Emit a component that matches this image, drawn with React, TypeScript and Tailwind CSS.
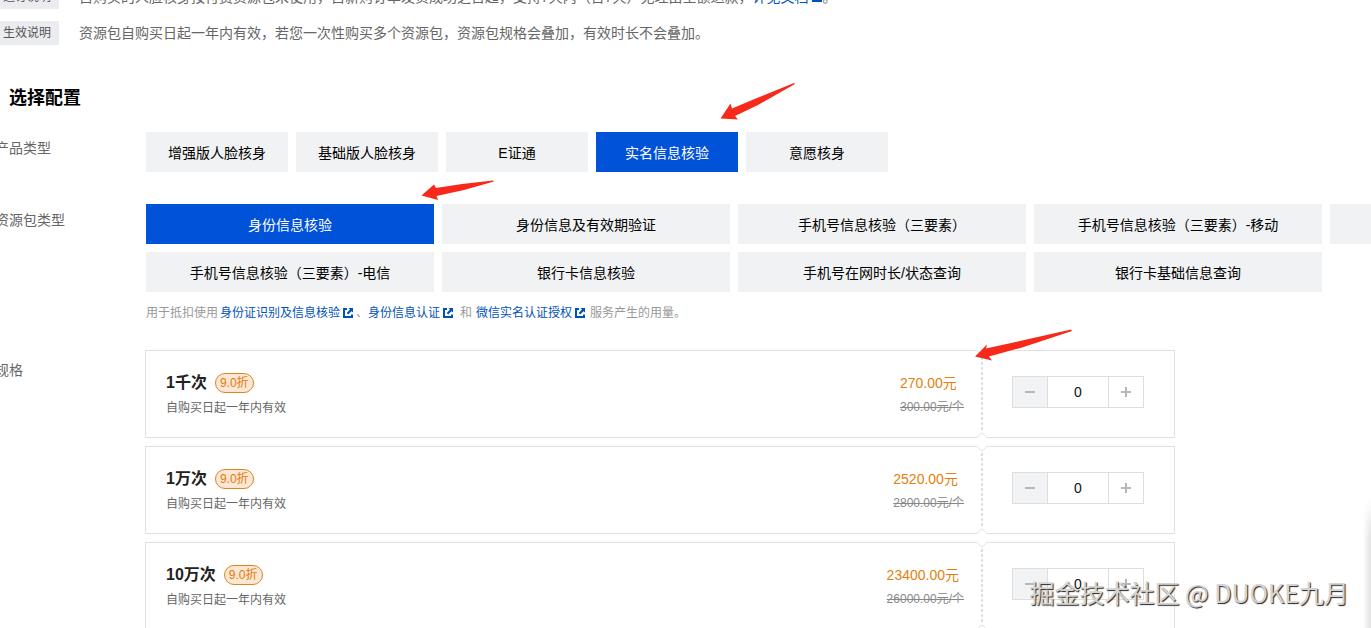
import { useState } from 'react';

const productTypes = ['增强版人脸核身', '基础版人脸核身', 'E证通', '实名信息核验', '意愿核身'];

const packTypes = [
  '身份信息核验',
  '身份信息及有效期验证',
  '手机号信息核验（三要素）',
  '手机号信息核验（三要素）-移动',
  '手机号信息核验（三要素）-联通',
  '手机号信息核验（三要素）-电信',
  '银行卡信息核验',
  '手机号在网时长/状态查询',
  '银行卡基础信息查询',
];

const specs = [
  { name: '1千次', price: '270.00元', original: '300.00元/个' },
  { name: '1万次', price: '2520.00元', original: '2800.00元/个' },
  { name: '10万次', price: '23400.00元', original: '26000.00元/个' },
];

function ExternalIcon() {
  return (
    <svg className="size-3 shrink-0" viewBox="0 0 12 12" fill="none" aria-hidden="true">
      <path d="M5 2H2V10H10V7.500" stroke="currentColor" strokeWidth="2" />
      <path d="M6.500 1H11V5.500L9.500 4.200L6.200 7.500L4.700 6L8 2.600Z" fill="currentColor" />
    </svg>
  );
}

function DocLink({ children }: { children: string }) {
  return (
    <a href="#doc" className="flex items-center gap-0.5 text-[#0052b8]">
      {children}
      <ExternalIcon />
    </a>
  );
}

function Options({ items, initial, label }: { items: string[]; initial: number; label: string }) {
  const [selected, setSelected] = useState(initial);
  return (
    <>
      {items.map((item, i) => (
        <button
          key={item}
          type="button"
          aria-label={`${label} ${item}`}
          aria-pressed={i === selected}
          onClick={() => setSelected(i)}
          className={`h-10 pt-0.5 whitespace-nowrap text-center ${
            i === selected ? 'bg-[#0052d9] text-white' : 'bg-[#f1f2f3] text-black'
          }`}
        >
          {item}
        </button>
      ))}
    </>
  );
}

function Stepper({ label }: { label: string }) {
  const [count, setCount] = useState(0);
  return (
    <div className="flex h-8 w-[132px] border border-[#dcdfe2]">
      <button
        type="button"
        aria-label={`减少 ${label}`}
        disabled={count === 0}
        onClick={() => setCount(count - 1)}
        className="flex w-[35px] items-center justify-center border-r border-[#dcdfe2] bg-[#f1f3f4] text-[#b5b7b9]"
      >
        <svg className="size-3" viewBox="0 0 12 12" aria-hidden="true">
          <path d="M1 6H11" stroke="currentColor" strokeWidth="2" />
        </svg>
      </button>
      <input
        aria-label={`数量 ${label}`}
        value={count}
        onChange={(e) => setCount(Number(e.target.value) || 0)}
        className="w-0 min-w-0 flex-1 bg-transparent text-center text-[#111] outline-none"
      />
      <button
        type="button"
        aria-label={`增加 ${label}`}
        onClick={() => setCount(count + 1)}
        className="flex w-[35px] items-center justify-center border-l border-[#dcdfe2] text-[#b5b7b9]"
      >
        <svg className="size-3" viewBox="0 0 12 12" aria-hidden="true">
          <path d="M1 6H11M6 1V11" stroke="currentColor" strokeWidth="2" />
        </svg>
      </button>
    </div>
  );
}

function Notch({ flip }: { flip?: boolean }) {
  return (
    <svg
      className={`absolute -left-[6px] h-[6px] w-[12px] ${flip ? '-bottom-px' : '-top-px rotate-180'}`}
      viewBox="0 0 12 6"
      aria-hidden="true"
    >
      <path d="M0 6L6 0.8L12 6Z" fill="white" />
      <path d="M0 5.5L1 5.5L6 0.8L11 5.5L12 5.5" fill="none" stroke="#dcdfe2" />
    </svg>
  );
}

function SpecCard({ name, price, original }: { name: string; price: string; original: string }) {
  return (
    <article className="flex h-[88px] border border-[#dfe1e3]">
      <div className="flex flex-1 items-start justify-between py-5 pr-[18px] pl-5">
        <div>
          <div className="flex h-6 items-center gap-2">
            <h3 className="text-base font-bold text-[#222]">{name}</h3>
            <span className="flex h-5 items-center rounded-full border border-[#dd8524] bg-[#fde6d2] px-1 text-xs text-[#e07b10]">
              9.0折
            </span>
          </div>
          <p className="h-[26px] text-xs leading-[26px] text-[#666]">自购买日起一年内有效</p>
        </div>
        <div>
          <p className="h-6 leading-6 text-[#e37f0c]">{price}</p>
          <p className="h-6 text-xs leading-6 text-[#888] line-through">{original}</p>
        </div>
      </div>
      <div className="relative flex w-[192px] items-center pb-1 pl-[30px]">
        <div className="absolute inset-y-[6px] -left-px w-[2px] bg-[repeating-linear-gradient(to_bottom,#dcdee0_0px,#dcdee0_3px,transparent_3px,transparent_5px)]" />
        <Notch />
        <Notch flip />
        <Stepper label={name} />
      </div>
    </article>
  );
}

export default function App() {
  return (
    <div className="relative h-screen overflow-hidden bg-white font-['Liberation_Sans','Noto_Sans_CJK_SC',sans-serif] text-sm">
      <main className="-mt-[15px] -ml-[5px]">
        <dl className="grid grid-cols-[64px_1fr] gap-x-5 gap-y-3 leading-6 text-[#666]">
          <dt className="h-6 bg-[#ebecef] text-center text-xs leading-6 text-[#555]">退订说明</dt>
          <dd className="flex h-6 whitespace-nowrap">
            自购买的人脸核身按付费资源包未使用，自新购订单发货成功之日起，支持7天内（含7天）无理由全额退款，
            <DocLink>详见文档</DocLink>。
          </dd>
          <dt className="h-6 bg-[#ebecef] text-center text-xs leading-6 text-[#555]">生效说明</dt>
          <dd className="h-6 whitespace-nowrap">
            资源包自购买日起一年内有效，若您一次性购买多个资源包，资源包规格会叠加，有效时长不会叠加。
          </dd>
        </dl>

        <h2 className="mt-[41px] pl-3.5 text-lg leading-6 font-bold text-black">选择配置</h2>

        <section className="mt-[22px] grid grid-cols-[151px_1fr]">
          <h3 className="leading-8 text-[#666]">产品类型</h3>
          <div className="grid grid-cols-[repeat(5,142px)] gap-2">
            <Options items={productTypes} initial={3} label="产品类型" />
          </div>
        </section>

        <section className="mt-8 grid grid-cols-[151px_1fr]">
          <h3 className="leading-8 text-[#666]">资源包类型</h3>
          <div>
            <div className="grid grid-cols-[repeat(5,288px)] gap-2">
              <Options items={packTypes} initial={0} label="资源包类型" />
            </div>
            <p className="mt-[9px] flex h-6 items-center text-xs text-[#999]">
              <span className="mr-0.5">用于抵扣使用</span>
              <DocLink>身份证识别及信息核验</DocLink>
              <span className="ml-0.5">、</span>
              <DocLink>身份信息认证</DocLink>
              <span className="mr-1 ml-1.5">和</span>
              <DocLink>微信实名认证授权</DocLink>
              <span className="ml-1">服务产生的用量。</span>
            </p>
          </div>
        </section>

        <section className="mt-[25px] grid grid-cols-[150px_1030px]">
          <h3 className="leading-10 text-[#666]">规格</h3>
          <div className="flex flex-col gap-2">
            {specs.map((s) => (
              <SpecCard key={s.name} {...s} />
            ))}
          </div>
        </section>
      </main>

      <svg className="pointer-events-none absolute top-[82px] left-[720px] h-[40px] w-[76px]" viewBox="720 82 76 40" aria-hidden="true">
        <path d="M794 83L757 98L732 108.500L730.500 103.500L720.500 118.500L738 119.500L735 116L758 105L795 84Z" fill="#f7291a" />
      </svg>
      <svg className="pointer-events-none absolute top-[178px] left-[420px] h-[24px] w-[76px]" viewBox="420 178 76 24" aria-hidden="true">
        <path d="M493 180.500L462 184L436 188L434 184.500L421.500 195.500L438 200L436.500 196L464 190L494 181.500Z" fill="#f7291a" />
      </svg>
      <svg className="pointer-events-none absolute top-[328px] left-[973px] h-[34px] w-[100px]" viewBox="973 328 100 34" aria-hidden="true">
        <path d="M1071 329.500L1020 341L986 348.500L987 344.500L975 356.500L992 360.500L989 356.500L1022 347.500L1072 331Z" fill="#f7291a" />
      </svg>

      <div className="absolute right-0 bottom-0 h-[130px] w-2 bg-[linear-gradient(to_right,transparent,#e2e2e2)] [mask-image:linear-gradient(to_bottom,transparent,black_40px)]" />
      <p className="pointer-events-none absolute right-[22px] bottom-[18px] font-['Noto_Sans_CJK_SC',sans-serif] text-[25px] leading-9 whitespace-nowrap text-[#d4d4d4] [text-shadow:1px_1px_1px_#222]">
        掘金技术社区 @ DUOKE九月
      </p>
    </div>
  );
}
